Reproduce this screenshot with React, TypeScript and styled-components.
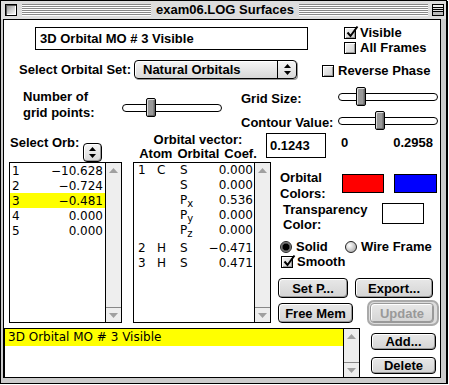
import React from "react";
import styled, { createGlobalStyle } from "styled-components";

const GlobalStyle = createGlobalStyle`
  html, body { margin: 0; padding: 0; background: #ffffff; }
  *, *::before, *::after { box-sizing: border-box; }
`;

const Window = styled.div`
  width: 447px;
  height: 384px;
  border: 1px solid #000;
  box-shadow: 1px 1px 0 #000;
  background: #cccccc;
  display: flex;
  flex-direction: column;
  font-family: "Liberation Sans", Arial, sans-serif;
  font-size: 13px;
  font-weight: bold;
  color: #000;
`;

const TitleBar = styled.div`
  height: 18px;
  flex: none;
  display: flex;
  align-items: center;
  padding: 0 2px 0 4px;
  background: #dddddd;
`;

const CloseBox = styled.div`
  width: 12px;
  height: 12px;
  flex: none;
  border: 1px solid #000;
  background: linear-gradient(135deg, #888 0%, #ccc 50%, #fff 100%);
  box-shadow: inset 1px 1px 0 #555, inset -1px -1px 0 #fff;
`;

const Stripes = styled.div<{ $side: "left" | "right" }>`
  flex: 1;
  height: 12px;
  margin: ${(p) => (p.$side === "left" ? "0 0 0 5px" : "0 4px 0 0")};
  background: repeating-linear-gradient(to bottom, #888 0 1px, #fff 1px 2px);
`;

const Title = styled.div`
  padding: 0 5px;
  white-space: nowrap;
  line-height: 16px;
`;

const CollapseBox = styled.div`
  width: 12px;
  height: 12px;
  flex: none;
  border: 1px solid #000;
  background: linear-gradient(
    to bottom,
    #eee 0 2px,
    #000 2px 3px,
    #ddd 3px 4px,
    #000 4px 5px,
    #ddd 5px 6px,
    #000 6px 7px,
    #bbb 7px
  );
`;

const Body = styled.div`
  flex: 1;
  display: flex;
  padding: 0 5px 5px 2px;
`;

const Content = styled.div`
  flex: 1;
  border: 1px solid #000;
  background: #fff;
  display: flex;
  flex-direction: column;
`;

/* ---------- rows ---------- */

const TopRow = styled.div`
  height: 35px;
  flex: none;
  display: flex;
  align-items: flex-start;
`;

const NameField = styled.div`
  width: 273px;
  height: 23px;
  margin: 7px 0 0 31px;
  border: 1px solid #000;
  padding: 0 4px;
  display: flex;
  align-items: center;
  white-space: nowrap;
`;

const CheckStack = styled.div`
  margin: 7px 0 0 36px;
  display: flex;
  flex-direction: column;
  gap: 3px;
`;

const CheckRow = styled.div<{ $ml?: number; $mt?: number }>`
  height: 12px;
  display: flex;
  align-items: center;
  gap: 4px;
  margin-left: ${(p) => p.$ml ?? 0}px;
  margin-top: ${(p) => p.$mt ?? 0}px;
  line-height: 12px;
  white-space: nowrap;
`;

const CheckBox = styled.span`
  position: relative;
  width: 12px;
  height: 12px;
  flex: none;
  border: 1px solid #000;
  background: linear-gradient(135deg, #f4f4f4, #cfcfcf);
  box-shadow: inset 1px 1px 0 #fff, inset -1px -1px 0 #999;
`;

const CheckMark = styled.svg`
  position: absolute;
  left: 0;
  top: -3px;
`;

const SetRow = styled.div`
  height: 29px;
  flex: none;
  display: flex;
  align-items: flex-start;
`;

const FieldLabel = styled.div<{ $ml: number; $w: number; $mt?: number; $lh?: number }>`
  margin-left: ${(p) => p.$ml}px;
  margin-top: ${(p) => p.$mt ?? 0}px;
  width: ${(p) => p.$w}px;
  line-height: ${(p) => p.$lh ?? 19}px;
  flex: none;
  white-space: nowrap;
`;

const Popup = styled.div`
  width: 163px;
  height: 19px;
  margin-top: 5px;
  flex: none;
  display: flex;
  border: 1px solid #000;
  border-radius: 4px;
  background: linear-gradient(#f6f6f6, #d8d8d8);
  box-shadow: inset 1px 1px 0 #fff, 1px 1px 0 #999;
`;

const PopupText = styled.span`
  flex: 1;
  padding-left: 8px;
  line-height: 17px;
  white-space: nowrap;
`;

const PopupArrows = styled.span`
  width: 19px;
  flex: none;
  border-left: 1px solid #000;
  display: flex;
  align-items: center;
  justify-content: center;
`;

const ArrowsButton = styled.div`
  width: 19px;
  height: 19px;
  margin-top: 11px;
  flex: none;
  border: 1px solid #000;
  border-radius: 4px;
  background: linear-gradient(#f6f6f6, #d8d8d8);
  box-shadow: inset 1px 1px 0 #fff, inset -1px -1px 0 #999;
  display: flex;
  align-items: center;
  justify-content: center;
`;

/* ---------- sliders ---------- */

const SliderRow = styled.div`
  height: 48px;
  flex: none;
  display: flex;
  align-items: flex-start;
`;

const GridPointsBlock = styled.div`
  margin-left: 19px;
  display: flex;
  align-items: flex-start;
`;

const SliderStack = styled.div`
  margin-left: 19px;
  display: flex;
  flex-direction: column;
`;

const SliderLine = styled.div<{ $mt: number }>`
  display: flex;
  align-items: center;
  margin-top: ${(p) => p.$mt}px;
`;

const SliderLabel = styled.div`
  width: 97px;
  padding-top: 4px;
  white-space: nowrap;
`;

const SliderBox = styled.div<{ $mt?: number }>`
  width: 100px;
  height: 19px;
  flex: none;
  margin-top: ${(p) => p.$mt ?? 0}px;
  display: flex;
  align-items: center;
`;

const Track = styled.div`
  width: 100%;
  height: 8px;
  border: 1px solid #000;
  border-radius: 4px;
  background: #fff;
  display: flex;
  align-items: center;
`;

const Thumb = styled.div`
  flex: none;
  width: 10px;
  height: 19px;
  border: 1px solid #000;
  border-radius: 2px;
  background: linear-gradient(to right, #b8b8b8 0 1px, #999 1px 6px, #808080 6px);
  box-shadow: inset 1px 1px 0 #ddd, inset -1px -1px 0 #666;
`;

/* ---------- middle ---------- */

const HeaderRow = styled.div`
  height: 30px;
  flex: none;
  display: flex;
  align-items: flex-start;
`;

const VectorHeader = styled.div`
  margin: 1px 0 0 31px;
  width: 130px;
  flex: none;
  text-align: center;
  line-height: 14px;
  white-space: nowrap;
`;

const ColumnHeads = styled.div`
  display: flex;
  justify-content: center;
  gap: 5px;
`;

const ContourBox = styled.div`
  margin: 1px 0 0 3px;
  width: 60px;
  height: 25px;
  flex: none;
  border: 1px solid #000;
  padding-left: 3px;
  display: flex;
  align-items: center;
`;

const RangeText = styled.div<{ $ml?: number; $mr?: number; $auto?: boolean }>`
  margin-top: 3px;
  margin-left: ${(p) => (p.$auto ? "auto" : `${p.$ml ?? 0}px`)};
  margin-right: ${(p) => p.$mr ?? 0}px;
  line-height: 15px;
`;

const ListsRow = styled.div`
  height: 166px;
  flex: none;
  display: flex;
  align-items: flex-start;
`;

const ListFrame = styled.div<{ $w: number; $ml: number }>`
  width: ${(p) => p.$w}px;
  height: 161px;
  margin-left: ${(p) => p.$ml}px;
  flex: none;
  border: 1px solid #000;
  display: flex;
  font-family: "DejaVu Sans", Verdana, sans-serif;
  font-weight: normal;
  font-size: 12px;
`;

const ListRows = styled.div`
  flex: 1;
  display: flex;
  flex-direction: column;
`;

const OrbRow = styled.div<{ $sel?: boolean }>`
  height: 15px;
  flex: none;
  display: flex;
  justify-content: space-between;
  align-items: center;
  padding: 0 2px;
  background: ${(p) => (p.$sel ? "#ffff00" : "transparent")};
`;

const VecRow = styled.div<{ $h: number }>`
  height: ${(p) => p.$h}px;
  flex: none;
  display: grid;
  grid-template-columns: 19px 23px 1fr auto;
  align-items: start;
  line-height: 15px;
  padding: 0 1px 0 4px;
`;

const Sub = styled.sub`
  font-size: 10px;
  vertical-align: -3px;
  line-height: 0;
`;

const ScrollBar = styled.div`
  width: 16px;
  flex: none;
  border-left: 1px solid #000;
  background: #eeeeee;
  display: flex;
  flex-direction: column;
  justify-content: space-between;
`;

const ScrollArrow = styled.div<{ $dir: "up" | "down" }>`
  height: 15px;
  display: flex;
  align-items: center;
  justify-content: center;
  border-top: ${(p) => (p.$dir === "down" ? "1px solid #888" : "none")};
`;

/* ---------- right controls ---------- */

const RightControls = styled.div`
  margin-left: 7px;
  flex: 1;
  display: flex;
  flex-direction: column;
`;

const SwatchRow = styled.div<{ $mt: number; $h: number }>`
  margin-top: ${(p) => p.$mt}px;
  height: ${(p) => p.$h}px;
  display: flex;
  align-items: flex-start;
`;

const Swatch = styled.div<{ $color: string; $w: number; $h: number; $ml?: number; $mt: number }>`
  width: ${(p) => p.$w}px;
  height: ${(p) => p.$h}px;
  margin-left: ${(p) => p.$ml ?? 0}px;
  margin-top: ${(p) => p.$mt}px;
  flex: none;
  border: 1px solid #000;
  background: ${(p) => p.$color};
`;

const RadioRow = styled.div`
  margin: 9px 0 0 2px;
  height: 12px;
  display: flex;
  align-items: center;
`;

const RadioItem = styled.div<{ $w?: number }>`
  width: ${(p) => (p.$w ? `${p.$w}px` : "auto")};
  display: flex;
  align-items: center;
  gap: 4px;
  line-height: 12px;
  white-space: nowrap;
`;

const Radio = styled.span<{ $on?: boolean }>`
  width: 12px;
  height: 12px;
  flex: none;
  border-radius: 50%;
  border: 1px solid #222;
  background: ${(p) =>
    p.$on
      ? "radial-gradient(circle at 50% 50%, #000 0 3px, #444 3.5px, #999 5px)"
      : "radial-gradient(circle at 35% 35%, #fff 0, #ddd 35%, #999 100%)"};
`;

const ButtonRow = styled.div<{ $mt: number }>`
  margin-top: ${(p) => p.$mt}px;
  display: flex;
  align-items: flex-start;
`;

const PushButton = styled.button<{ $w: number; $h?: number; $ml?: number; $mt?: number; $off?: boolean }>`
  width: ${(p) => p.$w}px;
  height: ${(p) => p.$h ?? 20}px;
  margin: ${(p) => p.$mt ?? 0}px 0 0 ${(p) => p.$ml ?? 0}px;
  flex: none;
  padding: 0;
  border: 1px solid ${(p) => (p.$off ? "#999" : "#000")};
  border-radius: 4px;
  background: linear-gradient(#e8e8e8, #d4d4d4);
  box-shadow: inset 1px 1px 0 #fff, inset -1px -1px 0 #999;
  font: inherit;
  color: ${(p) => (p.$off ? "#999" : "#000")};
  line-height: 1;
  white-space: nowrap;
`;

const DefaultRing = styled.div<{ $ml: number }>`
  margin-left: ${(p) => p.$ml}px;
  width: 72px;
  height: 26px;
  flex: none;
  border: 2px solid #aaa;
  border-radius: 7px;
  padding: 1px;
  background: #ddd;
`;

/* ---------- bottom ---------- */

const BottomRow = styled.div`
  flex: 1;
  display: flex;
  align-items: stretch;
`;

const SurfaceList = styled.div`
  width: 356px;
  flex: none;
  border: 1px solid #000;
  border-bottom: none;
  display: flex;
  font-family: "DejaVu Sans", Verdana, sans-serif;
  font-weight: normal;
  font-size: 12px;
`;

const SurfaceRow = styled.div<{ $sel?: boolean }>`
  height: 17px;
  padding-left: 3px;
  line-height: 17px;
  white-space: nowrap;
  background: ${(p) => (p.$sel ? "#ffff00" : "transparent")};
`;

const SideButtons = styled.div`
  margin: 5px 0 0 11px;
  display: flex;
  flex-direction: column;
  gap: 7px;
`;

/* ---------- small drawings ---------- */

const UpDown = () => (
  <svg width="7" height="11" viewBox="0 0 7 11">
    <polygon points="0,4 3.5,0 7,4" fill="#000" />
    <polygon points="0,7 3.5,11 7,7" fill="#000" />
  </svg>
);

const Tri = ({ dir }: { dir: "up" | "down" }) => (
  <svg width="9" height="5" viewBox="0 0 9 5">
    <polygon points={dir === "up" ? "0,5 4.5,0 9,5" : "0,0 4.5,5 9,0"} fill="#a0a0a0" />
  </svg>
);

const Check = ({ checked, label, ml, mt }: { checked?: boolean; label: string; ml?: number; mt?: number }) => (
  <CheckRow $ml={ml} $mt={mt}>
    <CheckBox>
      {checked && (
        <CheckMark width="14" height="14" viewBox="0 0 14 14">
          <path d="M2.5 7.5 L5.5 11 L12.5 1.5" stroke="#000" strokeWidth="2" fill="none" />
        </CheckMark>
      )}
    </CheckBox>
    <span>{label}</span>
  </CheckRow>
);

const Slider = ({ pos, mt }: { pos: number; mt?: number }) => (
  <SliderBox $mt={mt}>
    <Track>
      <Thumb style={{ marginLeft: pos }} />
    </Track>
  </SliderBox>
);

const Scroller = () => (
  <ScrollBar>
    <ScrollArrow $dir="up">
      <Tri dir="up" />
    </ScrollArrow>
    <ScrollArrow $dir="down">
      <Tri dir="down" />
    </ScrollArrow>
  </ScrollBar>
);

const orbitals = [
  { n: 1, v: "−10.628" },
  { n: 2, v: "−0.724" },
  { n: 3, v: "−0.481", sel: true },
  { n: 4, v: "0.000" },
  { n: 5, v: "0.000" },
];

const vector = [
  { idx: "1", atom: "C", orb: "S", coef: "0.000" },
  { idx: "", atom: "", orb: "S", coef: "0.000" },
  { idx: "", atom: "", orb: "P", sub: "x", coef: "0.536" },
  { idx: "", atom: "", orb: "P", sub: "y", coef: "0.000" },
  { idx: "", atom: "", orb: "P", sub: "z", coef: "0.000", tall: true },
  { idx: "2", atom: "H", orb: "S", coef: "−0.471" },
  { idx: "3", atom: "H", orb: "S", coef: "0.471" },
];

const App: React.FC = () => {
  return (
    <>
      <GlobalStyle />
      <Window>
        <TitleBar>
          <CloseBox />
          <Stripes $side="left" />
          <Title>exam06.LOG Surfaces</Title>
          <Stripes $side="right" />
          <CollapseBox />
        </TitleBar>
        <Body>
          <Content>
            <TopRow>
              <NameField>3D Orbital MO # 3 Visible</NameField>
              <CheckStack>
                <Check checked label="Visible" />
                <Check label="All Frames" />
              </CheckStack>
            </TopRow>

            <SetRow>
              <FieldLabel $ml={15} $w={115} $mt={5}>
                Select Orbital Set:
              </FieldLabel>
              <Popup>
                <PopupText>Natural Orbitals</PopupText>
                <PopupArrows>
                  <UpDown />
                </PopupArrows>
              </Popup>
              <Check label="Reverse Phase" ml={25} mt={10} />
            </SetRow>

            <SliderRow>
              <GridPointsBlock>
                <FieldLabel $ml={0} $w={99} $mt={5} $lh={16}>
                  Number of
                  <br />
                  grid points:
                </FieldLabel>
                <Slider pos={23} mt={14} />
              </GridPointsBlock>
              <SliderStack>
                <SliderLine $mt={3}>
                  <SliderLabel>Grid Size:</SliderLabel>
                  <Slider pos={17} />
                </SliderLine>
                <SliderLine $mt={5}>
                  <SliderLabel>Contour Value:</SliderLabel>
                  <Slider pos={36} />
                </SliderLine>
              </SliderStack>
            </SliderRow>

            <HeaderRow>
              <FieldLabel $ml={6} $w={73} $mt={3} $lh={15}>
                Select Orb:
              </FieldLabel>
              <ArrowsButton>
                <UpDown />
              </ArrowsButton>
              <VectorHeader>
                <div>Orbital vector:</div>
                <ColumnHeads>
                  <span>Atom</span>
                  <span>Orbital</span>
                  <span>Coef.</span>
                </ColumnHeads>
              </VectorHeader>
              <ContourBox>0.1243</ContourBox>
              <RangeText $ml={15}>0</RangeText>
              <RangeText $auto $mr={7}>
                0.2958
              </RangeText>
            </HeaderRow>

            <ListsRow>
              <ListFrame $w={113} $ml={5}>
                <ListRows>
                  {orbitals.map((o) => (
                    <OrbRow key={o.n} $sel={o.sel}>
                      <span>{o.n}</span>
                      <span>{o.v}</span>
                    </OrbRow>
                  ))}
                </ListRows>
                <Scroller />
              </ListFrame>

              <ListFrame $w={138} $ml={11}>
                <ListRows>
                  {vector.map((r, i) => (
                    <VecRow key={i} $h={r.tall ? 18 : 15}>
                      <span>{r.idx}</span>
                      <span>{r.atom}</span>
                      <span>
                        {r.orb}
                        {r.sub && <Sub>{r.sub}</Sub>}
                      </span>
                      <span>{r.coef}</span>
                    </VecRow>
                  ))}
                </ListRows>
                <Scroller />
              </ListFrame>

              <RightControls>
                <SwatchRow $mt={8} $h={32}>
                  <FieldLabel $ml={2} $w={62} $lh={16}>
                    Orbital
                    <br />
                    Colors:
                  </FieldLabel>
                  <Swatch $color="#ff0000" $w={42} $h={19} $mt={4} />
                  <Swatch $color="#0000ff" $w={43} $h={19} $mt={4} $ml={10} />
                </SwatchRow>
                <SwatchRow $mt={0} $h={30}>
                  <FieldLabel $ml={5} $w={99} $lh={15}>
                    Transparency
                    <br />
                    Color:
                  </FieldLabel>
                  <Swatch $color="#ffffff" $w={42} $h={21} $mt={1} />
                </SwatchRow>
                <RadioRow>
                  <RadioItem $w={65}>
                    <Radio $on />
                    <span>Solid</span>
                  </RadioItem>
                  <RadioItem>
                    <Radio />
                    <span>Wire Frame</span>
                  </RadioItem>
                </RadioRow>
                <Check checked label="Smooth" ml={3} mt={3} />
                <ButtonRow $mt={10}>
                  <PushButton $w={70}>Set P...</PushButton>
                  <PushButton $w={78} $ml={7}>
                    Export...
                  </PushButton>
                </ButtonRow>
                <ButtonRow $mt={2}>
                  <PushButton $w={75} $mt={3}>
                    Free Mem
                  </PushButton>
                  <DefaultRing $ml={14}>
                    <PushButton $w={64} $h={20} $off>
                      Update
                    </PushButton>
                  </DefaultRing>
                </ButtonRow>
              </RightControls>
            </ListsRow>

            <BottomRow>
              <SurfaceList>
                <ListRows>
                  <SurfaceRow $sel>3D Orbital MO # 3 Visible</SurfaceRow>
                </ListRows>
                <Scroller />
              </SurfaceList>
              <SideButtons>
                <PushButton $w={65} $h={17}>
                  Add...
                </PushButton>
                <PushButton $w={65} $h={17}>
                  Delete
                </PushButton>
              </SideButtons>
            </BottomRow>
          </Content>
        </Body>
      </Window>
    </>
  );
};

export default App;
